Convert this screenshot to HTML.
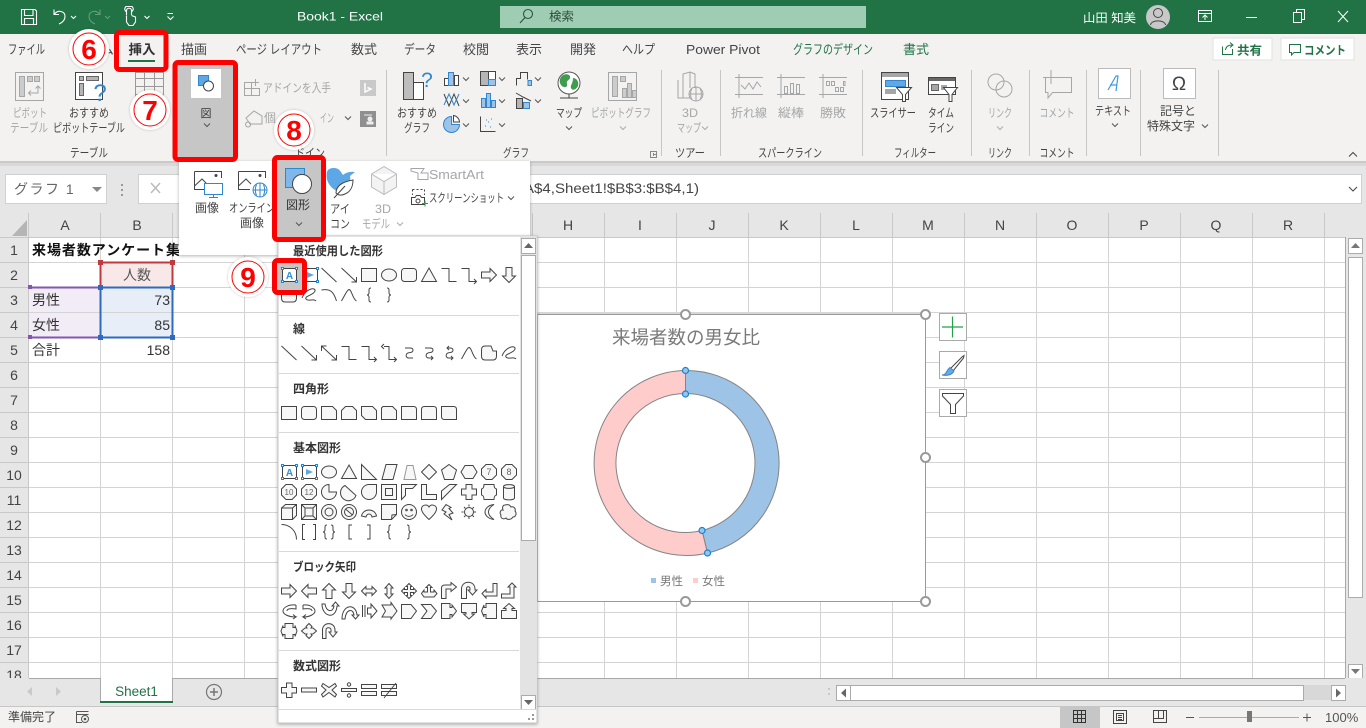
<!DOCTYPE html>
<html lang="ja"><head><meta charset="utf-8"><title>Book1 - Excel</title>
<style>
html,body{margin:0;padding:0;width:1366px;height:728px;overflow:hidden;background:#e6e6e6}
svg{display:block;position:absolute;left:0;top:0}
text{font-family:"Liberation Sans","Noto Sans CJK JP",sans-serif;font-size:12px;fill:#444;stroke:none}
.m{text-anchor:middle}.e{text-anchor:end}.g{fill:#a6a6a6}.w{fill:#fff}.gl{fill:#217346}
.tab text,.tab{font-size:13px}
.c{font-size:14px;fill:#333}.h{font-size:14px;fill:#444;text-anchor:middle}
.b{font-weight:bold;fill:#333}
.n{font-size:28px;font-weight:bold;fill:#f00;text-anchor:middle}
.s{fill:#f7f7f7;stroke:#444;stroke-width:1}
.s .f,.f{fill:none}
.ic{fill:none;stroke:#555;stroke-width:1}
.ig{fill:none;stroke:#a6a6a6;stroke-width:1}
.ch{fill:none;stroke:#555;stroke-width:1}
.chg{fill:none;stroke:#aaa;stroke-width:1}
.sm{font-size:9px;fill:#666;text-anchor:middle}
</style></head><body>
<svg width="1366" height="728" viewBox="0 0 1366 728" xmlns="http://www.w3.org/2000/svg">
<defs>
<filter id="ds" x="-5%" y="-5%" width="110%" height="110%"><feDropShadow dx="0" dy="1" stdDeviation="1.5" flood-color="#000" flood-opacity=".3"/></filter>
<filter id="gl" x="-20%" y="-20%" width="140%" height="140%"><feDropShadow dx="0" dy="0" stdDeviation="1.2" flood-color="#000" flood-opacity=".25"/></filter>
<path id="chev" d="M-3-1.5 0 1.5 3-1.5" fill="none"/>
<g id="tb"><rect x="-6.5" y="-6.5" width="14" height="13" fill="#fff" stroke="#444"/><text x="0.500" y="4" class="m" style="font-size:10px;font-weight:bold;fill:#2f8fd8">A</text><path d="M-7.500-7.500h2v2h-2zM6.500-7.500h2v2h-2zM-7.500 5.500h2v2h-2zM6.500 5.500h2v2h-2z" fill="#fff" stroke="#1e88d2"/></g>
<g id="vtb"><rect x="-6.500" y="-6.500" width="14" height="13" fill="#fff" stroke="#444"/><path d="M-3-3 4 0-3 3z" fill="#5aa8e0" stroke="none"/><path d="M-7.500-7.500h2v2h-2zM6.500-7.500h2v2h-2zM-7.500 5.500h2v2h-2zM6.500 5.500h2v2h-2z" fill="#fff" stroke="#1e88d2"/></g>
<path id="line" class="f" d="M-7.5-7 7.5 7"/>
<path id="arr" class="f" d="M-7.5-7 7.5 7M7.5 2V7H2.5"/>
<path id="dar" class="f" d="M-7.5-7 7.5 7M7.5 2V7H2.5M-7.5-2V-7H-2.5"/>
<rect id="rc" x="-7.5" y="-6.5" width="15" height="13"/>
<ellipse id="el" cx="0" cy="0" rx="7.5" ry="6"/>
<rect id="rr" x="-7.5" y="-6.5" width="15" height="13" rx="3"/>
<path id="tri" d="M0-7 7.5 6.5H-7.5z"/>
<path id="elb" class="f" d="M-7.5-6.5H0V6.5H7.5"/>
<path id="ela" class="f" d="M-7.5-6.5H0V6.5H7.5M5 4l2.5 2.5L5 9"/>
<path id="eld" class="f" d="M-5-6.5H0V6.5H7.5M5 4l2.5 2.5L5 9M-5-9l-2.5 2.5L-5-4"/>
<path id="ra" d="M-7.5-3H1V-6.5L7.5 0 1 6.5V3H-7.5z"/>
<path id="la" d="M7.5-3H-1V-6.5L-7.5 0-1 6.5V3H7.5z"/>
<path id="ua" d="M-3 7.5V-1H-6.5L0-7.5 6.5-1H3V7.5z"/>
<path id="da" d="M-3-7.5V1H-6.5L0 7.5 6.5 1H3V-7.5z"/>
<path id="ff" d="M-4-7H2L4-2H7.5V3Q7.5 7 4 7H-4Q-7.5 7-7.5 3V-3Q-7.5-7-4-7z"/>
<path id="scr" class="f" d="M-7 3C-3-7 7-8 6-4S-5 1-3 4 5 3 7 6"/>
<path id="cur" class="f" d="M-7.5-5C2-7 5-2 7.5 6"/>
<path id="wav" class="f" d="M-7.5 6C-3-2-1-7 1-5S4 4 7.5 6"/>
<path id="lb" class="f" d="M2-7C0-7 0-6 0-4V-2C0-1-1 0-2 0-1 0 0 1 0 2V4C0 6 0 7 2 7"/>
<path id="rb" class="f" d="M-2-7C0-7 0-6 0-4V-2C0-1 1 0 2 0 1 0 0 1 0 2V4C0 6 0 7-2 7"/>
<path id="sc" class="f" d="M-4-5H1C5-5 5-1 1-.5-4 0-4 5 0 5H4"/>
<path id="sna" class="f" d="M-4-5H1C5-5 5-1 1-.5-4 0-4 5 0 5H4M2 3l2 2-2 2"/>
<path id="snd" class="f" d="M-2-5H1C5-5 5-1 1-.5-4 0-4 5 0 5H4M2 3l2 2-2 2M0-7-2-5 0-3"/>
<path id="sn1" d="M-7.5-6.5H3.5L7.5-2.5V6.5H-7.5z"/>
<path id="sn2" d="M-3.5-6.5H3.5L7.5-2.5V6.5H-7.5V-2.5z"/>
<path id="snd2" d="M-7.5-6.5H3.5L7.5-2.5V6.5H-3.5L-7.5 2.5z"/>
<path id="sr" d="M-6-6.5H3.5L7.5-2.5V6.5H-7.5V-5z"/>
<path id="r1" d="M-7.5-6.5H4.5Q7.5-6.5 7.5-3.5V6.5H-7.5z"/>
<path id="r2" d="M-4.5-6.5H4.5Q7.5-6.5 7.5-3.5V6.5H-7.5V-3.5Q-7.5-6.5-4.5-6.5z"/>
<path id="r3" d="M-7.5-6.5H4.5Q7.5-6.5 7.5-3.5V6.5H-4.5Q-7.5 6.5-7.5 3.5z"/>
<path id="oc" d="M-3-7.5H3L7.5-3V3L3 7.5H-3L-7.5 3V-3z"/>
<path id="hex" d="M-4-6.5H4L8 0 4 6.5H-4L-8 0z"/>
</defs>

<!-- Title bar -->
<rect width="1366" height="34" fill="#217346"/>
<g fill="none" stroke="#fff" stroke-width="1.1">
<path d="M21.5 9.5H35L36.5 11V24.500H21.5zM24.500 9.500V15.500H33V9.500M24.500 24.500V18.500H33.500V24.500"/>
<path d="M54 9.500V14.500H59M54.500 14C58 9.500 65 11 65 16.500 65 20 62.500 22.500 59 24"/>
<path d="M71 16l2.500 2.500L76 16"/>
<path opacity=".3" d="M100 9.500V14.500H95M99.500 14C96 9.500 89 11 89 16.500 89 20 91.500 22.500 95 24M105 16l2.500 2.500L110 16"/>
<path d="M126.500 15V10.500C126.500 7.500 131.500 7.500 131.500 10.500V15M127 12C124.500 11 124 8 126 6.500H132C134 8 133.500 11 131 12M126.500 15.500V22L129 25.500H133L135.500 22V17L131.500 15.500"/>
<path d="M144.500 16l2.500 2.500L149.500 16M167.500 13.500H173M167.500 16.500l3 3 3-3"/>
</g>
<text x="297" y="20.500" class="w" textLength="86" lengthAdjust="spacingAndGlyphs">Book1  -  Excel</text>
<rect x="500" y="6" width="366" height="22" fill="#9fcdb3"/>
<circle cx="528" cy="14" r="4.500" fill="none" stroke="#2b5a41" stroke-width="1.100"/><path d="M525 17.500 520 23" stroke="#2b5a41" stroke-width="1.200"/>
<text x="549" y="20.500" style="fill:#2b4a3a" textLength="25" lengthAdjust="spacingAndGlyphs">検索</text>
<text x="1083" y="22" class="w" textLength="53" lengthAdjust="spacingAndGlyphs">山田 知美</text>
<circle cx="1158" cy="17" r="12" fill="#c8c8c8"/><circle cx="1158" cy="13" r="4.500" fill="none" stroke="#444"/><path d="M1150.500 25C1151 19.500 1165 19.500 1165.500 25" fill="none" stroke="#444"/>
<g fill="none" stroke="#fff"><path d="M1198.500 10.500H1211.500V21.500H1198.500zM1198.500 13.500H1211.500M1205 20V15.500M1202.500 17.500l2.500-2.500 2.500 2.500"/>
<path d="M1246 17.500H1257M1293.500 12.500H1301.500V22.500H1293.500zM1296.500 12.500V9.500H1304.500V19.500H1301.500M1338 11 1348 22M1348 11 1338 22"/></g>

<!-- Ribbon -->
<rect y="34" width="1366" height="127" fill="#f3f2f1"/>
<rect y="161" width="1366" height="5" fill="#d9d9d9"/><rect y="161" width="1366" height="2" fill="#c9c9c9"/>
<g>
<text x="8" y="54" style="font-size:13px" textLength="37" lengthAdjust="spacingAndGlyphs">ファイル</text>
<text x="181" y="54" style="font-size:13px" textLength="26" lengthAdjust="spacingAndGlyphs">描画</text>
<text x="236" y="54" style="font-size:13px" textLength="86" lengthAdjust="spacingAndGlyphs">ページ レイアウト</text>
<text x="351" y="54" style="font-size:13px" textLength="26" lengthAdjust="spacingAndGlyphs">数式</text>
<text x="404" y="54" style="font-size:13px" textLength="32" lengthAdjust="spacingAndGlyphs">データ</text>
<text x="463" y="54" style="font-size:13px" textLength="26" lengthAdjust="spacingAndGlyphs">校閲</text>
<text x="516" y="54" style="font-size:13px" textLength="26" lengthAdjust="spacingAndGlyphs">表示</text>
<text x="570" y="54" style="font-size:13px" textLength="26" lengthAdjust="spacingAndGlyphs">開発</text>
<text x="622" y="54" style="font-size:13px" textLength="33" lengthAdjust="spacingAndGlyphs">ヘルプ</text>
<text x="686" y="54" textLength="74" lengthAdjust="spacingAndGlyphs" style="font-size:13px">Power Pivot</text>
<text x="793" y="54" class="gl" style="font-size:13px" textLength="80" lengthAdjust="spacingAndGlyphs">グラフのデザイン</text>
<text x="903" y="54" class="gl" style="font-size:13px" textLength="26" lengthAdjust="spacingAndGlyphs">書式</text>
<text x="100" y="54" textLength="14" lengthAdjust="spacingAndGlyphs">ム</text>
</g>
<rect x="1213" y="38" width="59" height="22" fill="#fff" stroke="#e1e1e1"/>
<path d="M1222.500 46.500V54.500H1232.500V49M1225.500 50C1226 46 1229 45 1232 45M1230 42.500l3 2.500-3 2.500" fill="none" stroke="#217346"/>
<text x="1237" y="54.500" class="gl b" style="fill:#217346" textLength="25" lengthAdjust="spacingAndGlyphs">共有</text>
<rect x="1281" y="38" width="73" height="22" fill="#fff" stroke="#e1e1e1"/>
<path d="M1289.500 44.500H1300.500V52.500H1294L1291.500 55V52.500H1289.500z" fill="none" stroke="#217346"/>
<text x="1304" y="54.500" class="b" style="fill:#217346" textLength="42" lengthAdjust="spacingAndGlyphs">コメント</text>
<path d="M386.500 70V156M661.500 70V156M720.500 70V156M862.500 70V156M971.500 70V156M1029.500 70V156M1086.500 70V156M1140.500 70V156M1218.500 70V156" stroke="#c8c6c4"/>

<!-- tables group -->
<g class="ig"><rect x="15.500" y="72.500" width="28" height="28" fill="#f3f2f1"/><rect x="19.500" y="76.500" width="5" height="20" fill="#ccc"/><rect x="27.500" y="76.500" width="5" height="5" fill="#ccc"/><rect x="34.500" y="76.500" width="5" height="5" fill="#ccc"/><path d="M38 86V93H29M31 90.500l-2.500 2.500 2.500 2.500M35.500 88.500 38 86l2.500 2.500" /></g>
<text x="30" y="117" class="m g" textLength="34" lengthAdjust="spacingAndGlyphs">ピボット</text>
<text x="29" y="132" class="m g" textLength="38" lengthAdjust="spacingAndGlyphs">テーブル</text>
<g fill="none" stroke="#444"><rect x="75.500" y="72.500" width="27" height="27" fill="#fff"/><rect x="79.500" y="76.500" width="4" height="4" fill="#b5b5b5" stroke="#666"/><rect x="86.500" y="76.500" width="12" height="4" fill="#b5b5b5" stroke="#666"/><rect x="79.500" y="83.500" width="4" height="12" fill="#b5b5b5" stroke="#666"/></g>
<text x="100" y="101" class="m" style="font-size:24px;fill:#2f87d0">?</text>
<text x="89" y="117" class="m" textLength="40" lengthAdjust="spacingAndGlyphs">おすすめ</text>
<text x="89" y="132" class="m" textLength="72" lengthAdjust="spacingAndGlyphs">ピボットテーブル</text>
<path d="M135.500 72.500H163.500V96.500H135.500zM135.500 78.500H163.500M135.500 86.500H163.500M135.500 94.500H163.500M144.500 72.500V96.500M154.500 72.500V96.500" fill="none" stroke="#999"/>
<text x="89" y="157" class="m" textLength="38" lengthAdjust="spacingAndGlyphs">テーブル</text>

<!-- add-ins -->
<path d="M244.500 82.500H251.500V88.500H244.500zM244.500 88.500H251.500V95.500H244.500zM251.500 88.500H259.500V95.500H251.500zM255.500 79V86M252 82.500H259" fill="none" stroke="#a6a6a6"/>
<text x="263" y="92" class="g" textLength="68" lengthAdjust="spacingAndGlyphs">アドインを入手</text>
<rect x="360" y="80" width="16" height="16" fill="#c9c9c9"/><path d="M365 83V92L371 89 367.500 87.500" fill="none" stroke="#fff" stroke-width="1.500"/>
<path d="M246 118 254 111 262 116 262 124H250zM248 122a2.500 2.500 0 1 0 .1 0" fill="none" stroke="#a6a6a6"/>
<text x="264" y="122" class="g" textLength="12" lengthAdjust="spacingAndGlyphs">個</text>
<text x="320" y="122" class="g" textLength="14" lengthAdjust="spacingAndGlyphs">イン</text>
<use href="#chev" x="348" y="118" class="ch"/>
<rect x="360" y="111" width="16" height="16" fill="#8f8f8f"/><circle cx="370" cy="119" r="2.500" fill="#eee"/><path d="M364 115H372M367 124H373V122H367z" stroke="#eee" fill="#eee"/>
<text x="310" y="157" class="m" textLength="30" lengthAdjust="spacingAndGlyphs">ドイン</text>

<!-- charts -->
<rect x="403.500" y="72.500" width="10" height="27" fill="#bdbdbd" stroke="#444"/><rect x="413.500" y="82.500" width="10" height="17" fill="#fff" stroke="#444"/>
<text x="427" y="87" class="m" style="font-size:21px;fill:#2f87d0">?</text>
<text x="417" y="117" class="m" textLength="40" lengthAdjust="spacingAndGlyphs">おすすめ</text>
<text x="417" y="132" class="m" textLength="26" lengthAdjust="spacingAndGlyphs">グラフ</text>
<g stroke="#444">
<rect x="444.500" y="78.500" width="4" height="7" fill="#fff"/><rect x="448.500" y="72.500" width="5" height="13" fill="#9dc3e6" stroke="#2f87d0"/><rect x="454.500" y="75.500" width="4" height="10" fill="#fff"/>
<rect x="480.500" y="71.500" width="8" height="14" fill="#b5b5b5"/><rect x="488.500" y="71.500" width="7" height="8" fill="#fff"/><rect x="488.500" y="79.500" width="7" height="6" fill="#9dc3e6" stroke="#2f87d0"/>
<path d="M516.500 85.500V78.500H520.500V72.500H527.500V79.500M531.500 85.500V80.500H527.500" fill="none"/><path d="M528 80.500H531.500V85.500H528z" fill="#9dc3e6" stroke="#2f87d0"/>
<path d="M444 94 449 106 454 94 459 106" fill="none"/><path d="M444 105 449 94 454 105 459 94" fill="none" stroke="#2f87d0"/>
<rect x="481.500" y="98.500" width="4" height="9" fill="#9dc3e6" stroke="#2f87d0"/><rect x="486.500" y="93.500" width="4" height="14" fill="#9dc3e6" stroke="#2f87d0"/><rect x="491.500" y="100.500" width="4" height="7" fill="#9dc3e6" stroke="#2f87d0"/>
<rect x="516.500" y="98.500" width="6" height="10" fill="#b5b5b5"/><rect x="523.500" y="102.500" width="6" height="6" fill="#9dc3e6" stroke="#2f87d0"/><path d="M516 93 523 97 531 101" fill="none"/>
<path d="M451.500 116.500A8 8 0 1 0 459.500 124.500H451.500z" fill="#9dc3e6" stroke="#2f87d0"/><path d="M453.500 115.500A7 7 0 0 1 459.500 122H453.500z" fill="#fff"/>
<path d="M480.500 116.500V131.500H495.500" fill="none"/>
</g>
<path d="M485 126h1M488 122h1M491 119h1M490 127h1M486 120h1" stroke="#2f87d0"/>
<g class="ch"><use href="#chev" x="466" y="79"/><use href="#chev" x="502" y="79"/><use href="#chev" x="538" y="79"/><use href="#chev" x="466" y="101"/><use href="#chev" x="502" y="101"/><use href="#chev" x="538" y="101"/><use href="#chev" x="466" y="125"/><use href="#chev" x="502" y="125"/><use href="#chev" x="569" y="128"/></g>
<circle cx="569" cy="83" r="11" fill="#fff" stroke="#555"/>
<path d="M563 75C567 73 571 75 570 78S566 80 567 84 563 88 561 85 559 78 563 75zM573 78C577 78 579 82 578 86 576 90 572 91 571 88S573 84 573 78z" fill="#3f9e4d"/>
<path d="M560 98H578M569 94V98" stroke="#444"/>
<text x="569" y="117" class="m" textLength="26" lengthAdjust="spacingAndGlyphs">マップ</text>
<g class="ig"><rect x="608.500" y="72.500" width="28" height="28"/><rect x="612.500" y="76.500" width="5" height="20" fill="#ccc"/><rect x="620.500" y="76.500" width="5" height="5" fill="#ccc"/><rect x="622.500" y="88.500" width="4" height="9" fill="#ccc"/><rect x="627.500" y="83.500" width="4" height="14" fill="#ccc"/><rect x="632.500" y="90.500" width="4" height="7" fill="#ccc"/></g>
<text x="621" y="117" class="m g" textLength="60" lengthAdjust="spacingAndGlyphs">ピボットグラフ</text>
<use href="#chev" x="623" y="128" class="chg"/>
<text x="516" y="157" class="m" textLength="26" lengthAdjust="spacingAndGlyphs">グラフ</text>
<path d="M650.500 151.500H656.500V157.500H650.500zM653 154.500H656M653.500 153V156" fill="none" stroke="#888"/>

<!-- 3D map -->
<g class="ig"><path d="M678 80V98H690M683 98V74L690 72 695 74V88M690 72V88" /><circle cx="696" cy="94" r="7" /><path d="M689 94H703M696 87V101M692 88C690 92 690 96 692 100M700 88C702 92 702 96 700 100"/></g>
<text x="690" y="117" class="m g" textLength="16" lengthAdjust="spacingAndGlyphs">3D</text>
<text x="689" y="132" class="m g" textLength="24" lengthAdjust="spacingAndGlyphs">マップ</text><use href="#chev" x="705" y="128" class="chg"/>
<text x="690" y="157" class="m" textLength="30" lengthAdjust="spacingAndGlyphs">ツアー</text>

<!-- sparklines -->
<g class="ig"><path d="M735 77.500H763M735 94.500H763M739 74V98"/><path d="M741 85 745 89 749 83 753 89 757 82 761 87"/>
<path d="M777 77.500H805M777 94.500H805M781 74V98"/><path d="M784.500 86.500H787.500V93.500H784.500zM790.500 83.500H793.500V93.500H790.500zM796.500 84.500H799.500V93.500H796.500z"/>
<path d="M819 77.500H847M819 94.500H847M823 74V98"/><path d="M826.500 81.500H829.500V85.500H826.500zM831.500 81.500H834.500V85.500H831.500zM835.500 87.500H838.500V91.500H835.500zM840.500 87.500H843.500V91.500H840.500zM843.500 81.500H845V85.500H843.500z"/></g>
<text x="749" y="117" class="m g" textLength="36" lengthAdjust="spacingAndGlyphs">折れ線</text>
<text x="791" y="117" class="m g" textLength="26" lengthAdjust="spacingAndGlyphs">縦棒</text>
<text x="833" y="117" class="m g" textLength="26" lengthAdjust="spacingAndGlyphs">勝敗</text>
<text x="790" y="157" class="m" textLength="64" lengthAdjust="spacingAndGlyphs">スパークライン</text>

<!-- filters -->
<rect x="881.500" y="72.500" width="27" height="27" fill="#fff" stroke="#444"/><rect x="882" y="73" width="26" height="4" fill="#a6a6a6"/><rect x="885.500" y="80.500" width="20" height="6" fill="#63a8e4" stroke="#2f87d0"/><rect x="885" y="89" width="11" height="5" fill="#a6a6a6"/>
<path d="M896.500 87.500H911.500L905.500 94.500V101.500H902.500V94.500z" fill="#fff" stroke="#444"/>
<rect x="928.500" y="77.500" width="27" height="17" fill="#fff" stroke="#444"/><rect x="929" y="78" width="26" height="3" fill="#666"/><rect x="931.500" y="84.500" width="7" height="6" fill="#a6a6a6" stroke="#666"/><rect x="941" y="85" width="6" height="5" fill="#a6a6a6"/>
<path d="M943.500 87.500H957.500L952 94.500V101.500H949V94.500z" fill="#fff" stroke="#444"/>
<text x="893" y="117" class="m" textLength="46" lengthAdjust="spacingAndGlyphs">スライサー</text>
<text x="941" y="117" class="m" textLength="26" lengthAdjust="spacingAndGlyphs">タイム</text>
<text x="941" y="132" class="m" textLength="26" lengthAdjust="spacingAndGlyphs">ライン</text>
<text x="915" y="157" class="m" textLength="42" lengthAdjust="spacingAndGlyphs">フィルター</text>

<!-- links, comment -->
<g class="ig" stroke-width="1.200"><circle cx="996" cy="82" r="8"/><circle cx="1004" cy="89" r="8"/></g>
<text x="1000" y="117" class="m g" textLength="24" lengthAdjust="spacingAndGlyphs">リンク</text><use href="#chev" x="1000" y="128" class="chg"/>
<text x="1000" y="157" class="m" textLength="24" lengthAdjust="spacingAndGlyphs">リンク</text>
<path d="M1045.500 77.500H1071.500V92.500H1052.500L1048 98V92.500H1045.500zM1051 70V84M1043 77.500H1058" fill="none" stroke="#a6a6a6"/>
<text x="1057" y="117" class="m g" textLength="35" lengthAdjust="spacingAndGlyphs">コメント</text>
<text x="1057" y="157" class="m" textLength="35" lengthAdjust="spacingAndGlyphs">コメント</text>
<!-- text, symbols -->
<rect x="1098.500" y="68.500" width="32" height="30" fill="#fff" stroke="#bbb"/>
<path d="M1108 90 1116 76H1118L1116 91M1110 85H1117" fill="none" stroke="#3d9be0" stroke-width="1.200"/>
<text x="1113" y="115" class="m" textLength="36" lengthAdjust="spacingAndGlyphs">テキスト</text><use href="#chev" x="1115" y="125" class="ch"/>
<rect x="1163.500" y="68.500" width="32" height="30" fill="#fff" stroke="#bbb"/>
<text x="1179" y="90" class="m" style="font-size:19px;fill:#444">Ω</text>
<text x="1178" y="115" class="m" textLength="36" lengthAdjust="spacingAndGlyphs">記号と</text>
<text x="1171" y="130" class="m" textLength="48" lengthAdjust="spacingAndGlyphs">特殊文字</text><use href="#chev" x="1205" y="126" class="ch"/>
<path d="M1349 156.500l4-4 4 4" fill="none" stroke="#444"/>

<!-- Formula bar -->
<rect y="166" width="1366" height="47" fill="#e6e6e6"/>
<rect x="5.500" y="174.500" width="101" height="29" fill="#fff" stroke="#d0d0d0"/>
<text x="14" y="194" style="font-size:14px;fill:#666;letter-spacing:1.500px">グラフ 1</text>
<path d="M92 187H102L97 192z" fill="#888"/>
<path d="M122 184v2M122 189v2M122 194v2" stroke="#999" stroke-width="2"/>
<rect x="138.500" y="174.500" width="1223" height="29" fill="#fff" stroke="#d0d0d0"/>
<path d="M151 183l9 10M160 183l-9 10" stroke="#bbb" stroke-width="1.500"/>
<text x="524" y="193" style="font-size:14px;fill:#444" textLength="175" lengthAdjust="spacingAndGlyphs">A$4,Sheet1!$B$3:$B$4,1)</text>
<path d="M1349 187l4 4 4-4" fill="none" stroke="#444"/>

<!-- Sheet grid -->
<rect x="29" y="237" width="1316" height="441" fill="#fff"/>
<rect y="213" width="1345" height="24" fill="#e6e6e6"/>
<rect y="237" width="28" height="441" fill="#e6e6e6"/>
<path d="M27 236 27 220 12 236z" fill="#b5b5b5"/>
<g stroke="#d4d4d4">
<path d="M29 262.500H1345M29 287.500H1345M29 312.500H1345M29 337.500H1345M29 362.500H1345M29 387.500H1345M29 412.500H1345M29 437.500H1345M29 462.500H1345M29 487.500H1345M29 512.500H1345M29 537.500H1345M29 562.500H1345M29 587.500H1345M29 612.500H1345M29 637.500H1345M29 662.500H1345"/>
<path d="M100.500 237V678M172.500 237V678M244.500 237V678M316.500 237V678M388.500 237V678M460.500 237V678M532.500 237V678M604.500 237V678M676.500 237V678M748.500 237V678M820.500 237V678M892.500 237V678M964.500 237V678M1036.500 237V678M1108.500 237V678M1180.500 237V678M1252.500 237V678M1324.500 237V678"/>
</g>
<g stroke="#c8c8c8"><path d="M0 262.500H28M0 287.500H28M0 312.500H28M0 337.500H28M0 362.500H28M0 387.500H28M0 412.500H28M0 437.500H28M0 462.500H28M0 487.500H28M0 512.500H28M0 537.500H28M0 562.500H28M0 587.500H28M0 612.500H28M0 637.500H28M0 662.500H28M28.500 213V678M100.500 213V237M172.500 213V237M244.500 213V237M532.500 213V237M604.500 213V237M676.500 213V237M748.500 213V237M820.500 213V237M892.500 213V237M964.500 213V237M1036.500 213V237M1108.500 213V237M1180.500 213V237M1252.500 213V237M1324.500 213V237M0 237.500H1345"/></g>
<g>
<text class="h" x="65" y="230">A</text><text class="h" x="137" y="230">B</text><text class="h" x="568" y="230">H</text><text class="h" x="640" y="230">I</text><text class="h" x="712" y="230">J</text><text class="h" x="784" y="230">K</text><text class="h" x="856" y="230">L</text><text class="h" x="928" y="230">M</text><text class="h" x="1000" y="230">N</text><text class="h" x="1072" y="230">O</text><text class="h" x="1144" y="230">P</text><text class="h" x="1216" y="230">Q</text><text class="h" x="1288" y="230">R</text>
<text class="h" x="14" y="255">1</text><text class="h" x="14" y="280">2</text><text class="h" x="14" y="305">3</text><text class="h" x="14" y="330">4</text><text class="h" x="14" y="355">5</text><text class="h" x="14" y="380">6</text><text class="h" x="14" y="405">7</text><text class="h" x="14" y="430">8</text><text class="h" x="14" y="455">9</text><text class="h" x="14" y="480">10</text><text class="h" x="14" y="505">11</text><text class="h" x="14" y="530">12</text><text class="h" x="14" y="555">13</text><text class="h" x="14" y="580">14</text><text class="h" x="14" y="605">15</text><text class="h" x="14" y="630">16</text><text class="h" x="14" y="655">17</text><text class="h" x="14" y="680">18</text>
</g>
<!-- cell highlights -->
<rect x="101" y="263" width="71" height="24" fill="#f8e9e8"/>
<rect x="29" y="288" width="71" height="49" fill="#f1ecf6"/>
<rect x="101" y="288" width="71" height="49" fill="#e7eef8"/>
<path d="M29 312.500H172" stroke="#d4d4d4"/>
<text x="32" y="255" class="c" style="font-weight:bold;fill:#111" textLength="148">来場者数アンケート集</text>
<text x="137" y="280" class="c m" style="fill:#555">人数</text>
<text x="32" y="305" class="c">男性</text><text x="32" y="330" class="c">女性</text><text x="32" y="355" class="c">合計</text>
<text x="170" y="305" class="c e">73</text><text x="170" y="330" class="c e">85</text><text x="170" y="355" class="c e">158</text>
<path d="M30 287.500H100M30 337.500H100" stroke="#8456b3" stroke-width="2"/>
<rect x="28" y="285" width="4" height="4" fill="#8456b3"/><rect x="28" y="335" width="4" height="4" fill="#8456b3"/>
<rect x="100.500" y="262.500" width="72" height="25" fill="none" stroke="#c0393c" stroke-width="2"/>
<g fill="#c0393c"><rect x="98" y="260" width="5" height="5"/><rect x="170" y="260" width="5" height="5"/></g>
<rect x="100.500" y="287.500" width="72" height="50" fill="none" stroke="#2e6bc0" stroke-width="2"/>
<g fill="#2e6bc0"><rect x="98" y="285" width="5" height="5"/><rect x="170" y="285" width="5" height="5"/><rect x="98" y="335" width="5" height="5"/><rect x="170" y="335" width="5" height="5"/></g>

<!-- Chart -->
<rect x="536" y="312.500" width="390" height="2" fill="#d8d8d8"/>
<rect x="537.500" y="314.500" width="388" height="287" fill="#fff" stroke="#999"/>
<text x="686" y="344" class="m" style="font-size:18.500px;fill:#7a7a7a" textLength="148">来場者数の男女比</text>
<path d="M685.500 370.500A92.500 92.500 0 0 1 707.500 553.100L702 530.500A69.500 69.500 0 0 0 685.500 393.500z" fill="#9dc3e6" stroke="#848484"/>
<path d="M707.500 553.100A92.500 92.500 0 1 1 685.500 370.500V393.500A69.500 69.500 0 1 0 702 530.500z" fill="#ffcccc" stroke="#848484"/>
<g fill="#9dc3e6" stroke="#0f85d8" stroke-width="1.200"><circle cx="685.500" cy="370.500" r="3"/><circle cx="685.500" cy="394" r="3"/><circle cx="702" cy="530.500" r="3"/><circle cx="707.500" cy="553" r="3"/></g>
<rect x="651" y="578" width="5" height="5" fill="#9dc3e6"/><rect x="693" y="578" width="5" height="5" fill="#ffcccc"/>
<text x="660" y="585" style="font-size:11.500px;fill:#777">男性</text><text x="702" y="585" style="font-size:11.500px;fill:#777">女性</text>
<g fill="#fff" stroke="#999" stroke-width="2"><circle cx="685.500" cy="314.500" r="4.500"/><circle cx="925.500" cy="314.500" r="4.500"/><circle cx="925.500" cy="457.500" r="4.500"/><circle cx="685.500" cy="601.500" r="4.500"/><circle cx="925.500" cy="601.500" r="4.500"/></g>
<g fill="#fff" stroke="#aaa"><rect x="939.500" y="313.500" width="27" height="27"/><rect x="939.500" y="351.500" width="27" height="27"/><rect x="939.500" y="389.500" width="27" height="27"/></g>
<path d="M942 327H963M952.500 316.500V337.500" stroke="#22a146" stroke-width="1.200"/>
<path d="M950 369 962 357 964 355.500 963.500 358 953 371z" fill="#fff" stroke="#444"/>
<path d="M942 375C947 375 946 370 950 367.500L954 371C952 375 947 376 942 375z" fill="#6aa8e0" stroke="#3b86c9"/>
<path d="M942.500 393.500H963.500V396L955.500 404.500V413.500H950.500V404.500L942.500 396z" fill="#fff" stroke="#444"/>

<!-- V scrollbar -->
<rect x="1345" y="237" width="21" height="441" fill="#e6e6e6"/>
<path d="M1345.500 237V678" stroke="#a8a8a8"/>
<rect x="1348.500" y="238.500" width="14" height="15" fill="#fff" stroke="#ababab"/><path d="M1351 248H1360L1355.500 243z" fill="#777"/>
<rect x="1348.500" y="257.500" width="14" height="340" fill="#fff" stroke="#ababab"/>
<rect x="1348.500" y="664.500" width="14" height="14" fill="#fff" stroke="#ababab"/><path d="M1351 669H1360L1355.500 674z" fill="#777"/>

<!-- Tabs, hscroll -->
<rect y="678" width="1366" height="28" fill="#e6e6e6"/>
<path d="M29 678.500H1345" stroke="#a8a8a8"/>
<path d="M32 687V696L27 691.500zM56 687V696L61 691.500z" fill="#c9c9c9"/>
<rect x="100" y="678" width="73" height="25" fill="#fff"/>
<path d="M100.500 678V702M172.500 678V702" stroke="#aaa"/>
<rect x="100" y="701" width="73" height="2" fill="#217346"/>
<text x="136.500" y="696" class="m" style="font-size:13.500px;fill:#217346">Sheet1</text>
<circle cx="214" cy="692" r="7.500" fill="none" stroke="#777" stroke-width="1.200"/><path d="M210 692H218M214 688V696" stroke="#777" stroke-width="1.500"/>
<path d="M829 688v2M829 693v2" stroke="#aaa"/>
<rect x="836.500" y="685.500" width="14" height="15" fill="#fff" stroke="#ababab"/><path d="M846 688.500V697.500L841 693z" fill="#666"/>
<rect x="850.500" y="685.500" width="453" height="15" fill="#fff" stroke="#ababab"/>
<rect x="1304" y="685" width="27" height="15" fill="#d8d8d8"/>
<rect x="1331.500" y="685.500" width="14" height="15" fill="#fff" stroke="#ababab"/><path d="M1336 688.500V697.500L1341 693z" fill="#666"/>

<!-- Status bar -->
<rect y="706" width="1366" height="22" fill="#f3f2f1"/><path d="M0 706.500H1366" stroke="#c6c6c6"/>
<text x="8" y="721" textLength="48" lengthAdjust="spacingAndGlyphs">準備完了</text>
<path d="M76.500 711.500H88.500M76.500 714.500H88.500M76.500 711.500V722.500H82" fill="none" stroke="#555"/><circle cx="85" cy="719" r="3.500" fill="none" stroke="#555"/><circle cx="85" cy="719" r="1.300" fill="#555"/>
<rect x="1060" y="707" width="40" height="21" fill="#c6c6c6"/>
<path d="M1073.500 710.500H1085.500V722.500H1073.500zM1073.500 714.500H1085.500M1073.500 718.500H1085.500M1077.500 710.500V722.500M1081.500 710.500V722.500" fill="none" stroke="#333"/>
<path d="M1113.500 710.500H1126.500V723.500H1113.500zM1116.500 713.500H1123.500V720.500H1116.500zM1118 715.500H1122M1118 717.500H1122M1118 719.500H1122" fill="none" stroke="#444"/>
<path d="M1153.500 710.500H1166.500V722.500H1153.500zM1153.500 718.500H1163.500V710.500M1158.500 710.500V718.500" fill="none" stroke="#444"/>
<path d="M1186 717.500H1194M1303 717.500H1311M1307 713.500V721.500" stroke="#555"/>
<path d="M1199 717.500H1299" stroke="#aaa"/>
<rect x="1247" y="711" width="5" height="11" fill="#777"/>
<text x="1325" y="722" style="font-size:13px;fill:#555">100%</text>

<!-- Picture dropdown panel -->
<rect x="179" y="161" width="351" height="94" fill="#fff" filter="url(#ds)"/>
<g fill="none" stroke="#444"><path d="M194.500 171.500H221.500V178M194.500 171.500V189.500H204M194.500 186 202 179 207 184"/><circle cx="216" cy="175.500" r="1" fill="#444"/>
<rect x="204.500" y="183.500" width="18" height="11" stroke="#2f87d0" fill="#fff"/><path d="M213.500 194.500V197M209 197.500H218" stroke="#2f87d0"/>
<path d="M238.500 171.500H265.500V178M238.500 171.500V189.500H250M238.500 186 246 179 251 184"/><circle cx="260" cy="175.500" r="1" fill="#444"/></g>
<circle cx="260" cy="190" r="7" fill="#fff" stroke="#2f87d0"/><path d="M253 190H267M260 183V197M256.500 184.500C255 188 255 192 256.500 195.500M263.500 184.500C265 188 265 192 263.500 195.500" fill="none" stroke="#2f87d0"/>
<text x="207" y="212" class="m" textLength="24" lengthAdjust="spacingAndGlyphs">画像</text>
<text x="252" y="212" class="m" textLength="46" lengthAdjust="spacingAndGlyphs">オンライン</text>
<text x="252" y="227" class="m" textLength="24" lengthAdjust="spacingAndGlyphs">画像</text>
<path d="M327 172C328 168 334 167 338 169 341 171 342 174 343 175 345 173 350 171 355 172L350 176C351 181 350 187 345 191H337C330 188 325 180 327 172z" fill="#5da7e6"/>
<path d="M353 180C353 187 350 192 345 194 341 196 338 195 336 193 336 187 341 182 353 180zM334 198 345 186" fill="#fff" stroke="#444"/>
<text x="340" y="213" class="m" textLength="20" lengthAdjust="spacingAndGlyphs">アイ</text>
<text x="340" y="228" class="m" textLength="20" lengthAdjust="spacingAndGlyphs">コン</text>
<path d="M371.500 174 384 166.500 396.500 174V187L384 194.500 371.500 187zM371.500 174 384 181.500 396.500 174M384 181.500V194.500" fill="#f3f3f3" stroke="#bbb"/>
<text x="383" y="213" class="m g" textLength="16" lengthAdjust="spacingAndGlyphs">3D</text>
<text x="376" y="228" class="m g" textLength="28" lengthAdjust="spacingAndGlyphs">モデル</text><use href="#chev" x="400" y="224" class="chg"/>
<path d="M411 168.500H424L421 173H428V179.500H418V173L411 171z" fill="none" stroke="#a6a6a6"/>
<text x="429" y="179" class="g" style="font-size:12.500px" textLength="55" lengthAdjust="spacingAndGlyphs">SmartArt</text>
<path d="M412.500 189.500H424.500" stroke="#444" stroke-dasharray="2 2" fill="none"/><path d="M412.500 189.500V195M424.500 189.500V195" stroke="#444" stroke-dasharray="2 2"/>
<path d="M411.500 197.500H415L416.500 195.500H420L421.500 197.500H424.500V204.500H411.500z" fill="#fff" stroke="#444"/><circle cx="418" cy="201" r="2" fill="none" stroke="#444"/>
<path d="M422 203.500H428M425 200.500V206.500" stroke="#22a146"/>
<text x="429" y="202" textLength="75" lengthAdjust="spacingAndGlyphs">スクリーンショット</text><use href="#chev" x="511" y="198" class="ch"/>

<!-- Shapes menu -->
<rect x="278" y="236" width="259" height="487" fill="#fff" stroke="#c6c6c6" filter="url(#ds)"/>
<rect x="520" y="237" width="16" height="472" fill="#e3e3e3"/>
<rect x="521.500" y="238.500" width="14" height="15" fill="#fff" stroke="#ababab"/><path d="M524 248H533L528.500 243z" fill="#666"/>
<rect x="521.500" y="255.500" width="14" height="285" fill="#fff" stroke="#ababab"/>
<rect x="521.500" y="695.500" width="14" height="14" fill="#fff" stroke="#ababab"/><path d="M524 700H533L528.500 705z" fill="#666"/>
<path d="M279 315.500H519M279 373.500H519M279 432.500H519M279 551.500H519M279 650.500H519M279 709.500H536" stroke="#d9d9d9"/>
<path d="M532 714h2v2h-2zM532 718h2v2h-2zM528 718h2v2h-2z" fill="#999"/>
<text x="293" y="255" class="b" textLength="90" lengthAdjust="spacingAndGlyphs">最近使用した図形</text>
<text x="293" y="333" class="b">線</text>
<text x="293" y="393" class="b" textLength="36" lengthAdjust="spacingAndGlyphs">四角形</text>
<text x="293" y="452" class="b" textLength="48" lengthAdjust="spacingAndGlyphs">基本図形</text>
<text x="293" y="571" class="b" textLength="63" lengthAdjust="spacingAndGlyphs">ブロック矢印</text>
<text x="293" y="670" class="b" textLength="48" lengthAdjust="spacingAndGlyphs">数式図形</text>

<g class="s">
<!-- recent -->
<use href="#vtb" x="310" y="275"/><use href="#line" x="329" y="275"/><use href="#arr" x="349" y="275"/><use href="#rc" x="369" y="275"/><use href="#el" x="389" y="275"/><use href="#rr" x="409" y="275"/><use href="#tri" x="429" y="275"/><use href="#elb" x="449" y="275"/><use href="#ela" x="469" y="275"/><use href="#ra" x="489" y="275"/><use href="#da" x="509" y="275"/>
<use href="#ff" x="289" y="295"/><use href="#scr" x="309" y="295"/><use href="#cur" x="329" y="295"/><use href="#wav" x="349" y="295"/><use href="#lb" x="369" y="295"/><use href="#rb" x="389" y="295"/>
<!-- lines -->
<use href="#line" x="289" y="353"/><use href="#arr" x="309" y="353"/><use href="#dar" x="329" y="353"/><use href="#elb" x="349" y="353"/><use href="#ela" x="369" y="353"/><use href="#eld" x="389" y="353"/><use href="#sc" x="409" y="353"/><use href="#sna" x="429" y="353"/><use href="#snd" x="449" y="353"/><use href="#wav" x="469" y="353"/><use href="#ff" x="489" y="353"/><use href="#scr" x="509" y="353"/>
<!-- rects -->
<use href="#rc" x="289" y="413"/><use href="#rr" x="309" y="413"/><use href="#sn1" x="329" y="413"/><use href="#sn2" x="349" y="413"/><use href="#snd2" x="369" y="413"/><use href="#sr" x="389" y="413"/><use href="#r1" x="409" y="413"/><use href="#r2" x="429" y="413"/><use href="#r3" x="449" y="413"/>
<!-- basic -->
<use href="#tb" x="289" y="472"/><use href="#vtb" x="309" y="472"/><use href="#el" x="329" y="472"/><use href="#tri" x="349" y="472"/>
<path d="M361.500 464.500V479.500H376.500z"/>
<path d="M382 479.500 386 464.500H397L393 479.500z"/>
<path d="M404 479.500 407 465.500H413L416 479.500z" stroke="#999"/>
<path d="M429 464.500 436.500 472 429 479.500 421.500 472z"/>
<path d="M449 464.500 456.500 470 453.500 479.500H444.500L441.500 470z"/>
<use href="#hex" x="469" y="472"/><use href="#oc" x="489" y="472"/><use href="#oc" x="509" y="472"/>
<use href="#oc" x="289" y="492"/><use href="#oc" x="309" y="492"/>
<path d="M329 484.500A7.500 7.500 0 1 0 336.500 492H329z"/>
<path d="M345 485.500 356 495.500A8 8 0 1 1 345 485.500z"/>
<path d="M376.500 484.500V492A7.500 7.500 0 1 1 369 484.500z"/>
<path d="M381.500 484.500H396.500V499.500H381.500zM385.500 488.500H392.500V495.500H385.500z"/>
<path d="M401.500 484.500H416.500L412.500 488.500H405.500V495.500L401.500 499.500z"/>
<path d="M421.500 484.500H426.500V494.500H436.500V499.500H421.500z"/>
<path d="M441.500 499.500V491L449.500 484.500H456.500z"/>
<path d="M466 484.500H472V489H476.500V495H472V499.500H466V495H461.500V489H466z"/>
<path d="M484 484.500H494C494 487 495 489 496.500 489V495C495 495 494 497 494 499.500H484C484 497 483 495 481.500 495V489C483 489 484 487 484 484.500z"/>
<path d="M503.500 486.500V498C503.500 500.500 514.500 500.500 514.500 498V486.500C514.500 484 503.500 484 503.500 486.500zM503.500 486.500C503.500 489 514.500 489 514.500 486.500"/>
<path d="M281.500 508 285.500 504.500H296.500V515.500L292.500 519.500H281.500zM281.500 508H292.500V519.500M292.500 508 296.500 504.500"/>
<path d="M301.500 504.500H316.500V519.500H301.500zM305 508H313V516H305zM301.500 504.500 305 508M316.500 504.500 313 508M301.500 519.500 305 516M316.500 519.500 313 516"/>
<circle cx="329" cy="512" r="7.500"/><circle cx="329" cy="512" r="4"/>
<circle cx="349" cy="512" r="7.500"/><circle cx="349" cy="512" r="4.500"/><path d="M345.500 509 352.500 515"/>
<path d="M361.500 516C363 508 375 508 376.500 516L372 517C371 513 367 513 366 517z"/>
<path d="M381.500 504.500H396.500V514.500L391.500 519.500H381.500zM396.500 514.500 392 515 391.500 519.500"/>
<circle cx="409" cy="512" r="7.500"/><circle cx="406.500" cy="510" r=".8"/><circle cx="411.500" cy="510" r=".8"/><path class="f" d="M405 514.500C407 517 411 517 413 514.500"/>
<path d="M429 519.500C424 515 421.500 512 421.500 509 421.500 505 427 503.500 429 507 431 503.500 436.500 505 436.500 509 436.500 512 434 515 429 519.500z"/>
<path d="M446 504.500 442 510 446 512 444 514 452 520 449 514.500 453 513 449 508.500 451 507.500z"/>
<circle cx="469" cy="512" r="4.500"/><path class="f" stroke-dasharray="2 2" d="M469 504.500V507M469 517V519.500M461.500 512H464M474 512H476.500M464 507 465.500 508.500M472.500 515.500 474 517M464 517 465.500 515.500M472.500 508.500 474 507"/>
<path d="M494 504.500C488 505 485 509 485 512S488 519 494 519.500C490 517 488.500 515 488.500 512S490 507 494 504.500z"/>
<path d="M505 505C508 504 510 505 511 507 514 506 516 509 515 511 517 513 516 517 513 517 511 520 507 520 506 518 503 520 500 518 501 515 499 513 501 509 503 510 502 507 503 505 505 505z"/>
<path class="f" d="M281.500 524.500C290 524.500 296.500 531 296.500 539.500"/>
<path class="f" d="M305 524.500H302.500V539.500H305M313 524.500H315.500V539.500H313"/>
<use href="#lb" x="325" y="532"/><use href="#rb" x="333" y="532"/>
<path class="f" d="M352 525H349V539H352M367 525H370V539H367"/>
<use href="#lb" x="389" y="532"/><use href="#rb" x="409" y="532"/>
<!-- block arrows -->
<use href="#ra" x="289" y="591"/><use href="#la" x="309" y="591"/><use href="#ua" x="329" y="591"/><use href="#da" x="349" y="591"/>
<path d="M361.500 591 366 586.500V589H372V586.500L376.500 591 372 595.500V593H366V595.500z"/>
<path d="M389 583.500 393 588H391V594H393L389 598.500 385 594H387V588H385z"/>
<path d="M409 583.500 412 586.500H410.500V589.500H413.500V588L416.500 591 413.500 594V592.500H410.500V595.500H412L409 598.500 406 595.500H407.500V592.500H404.500V594L401.500 591 404.500 588V589.500H407.500V586.500H406z"/>
<path d="M429 584.500 432 587.500H430.500V592H434V590L437 593.500 434 597H424L421.500 593.500 424 590V592H427.500V587.500H426z"/>
<path d="M441.500 598.500V588C441.500 586 443 585 445 585H451V582.500L456.500 587 451 591.500V589H446V598.500z"/>
<path d="M461.500 598.500V589C461.500 580 475 580 475 589V590H477L472.500 595 468 590H470V589C470 586 466.500 586 466.500 589V598.500z"/>
<path d="M482 593.500 486 589.500V592H493V583.500H497V596H486V598z"/>
<path d="M501.500 594H510V587H508L512 583 516 587H514V598H501.500z"/>
<path class="f" d="M296 605C288 604 283 608 283 611S288 617 296 617L293 619M296 617 293 614.500M296 605V609C290 608 287 609 287 611"/>
<path class="f" d="M303 605C310 604 315 608 315 611S310 617 303 617L306 619M303 617 306 614.500M303 605V609C309 608 312 609 312 611"/>
<path class="f" d="M322 604C322 617 336 620 337 606H339L335.500 602 332 606H334C333 613 326 612 325 604z"/>
<path class="f" d="M342 619C342 604 356 603 357 615H359L355.500 619 352 615H354C353 608 346 609 345 619z"/>
<path d="M362.500 605V617M365 605V617M367.500 608H371V604L377 611 371 618V614H367.500z" fill="#fff"/>
<path d="M382 605H391V602.500L397 611 391 619V617H382L385.500 611z"/>
<path d="M401.500 604.500H411L416.500 611 411 618.500H401.500z"/>
<path d="M421.500 604.500H431L436.500 611 431 618.500H421.500L427 611z"/>
<path d="M441.500 603.500H450V607.500H452V605L456.500 611 452 617V614.500H450V618.500H441.500z"/>
<path d="M461.500 603.500H476.500V612.500H472V614H474.500L469 619 463.500 614H466V612.500H461.500z"/>
<path d="M486 603.500H496.500V618.500H486V614.500H484V617L481.500 611 484 605V607.500H486z"/>
<path d="M501.500 618.500V610.500H506V608.500H503.500L509 603.500 514.500 608.500H512V610.500H516.500V618.500z"/>
<path d="M285 623.500H293V627.500H295V625.500L297 631 295 636.500V634.500H293V638.500H285V634.500H283V636.500L281 631 283 625.500V627.500H285z"/>
<path d="M309 623.500 312 626.500 311 628H313L316.500 631 313 634H311L312 635.500 309 638.500 306 635.500 307 634H305L301.500 631 305 628H307L306 626.500z"/>
<path d="M322.500 638.500V630C322.500 621.500 335 621.500 335 630V632H337L333 637 329 632H331V630C331 627 326 627 326 630V638.500z"/>
<!-- equation -->
<path d="M286.500 683H292V687.500H296.500V693H292V697.500H286.500V693H281.500V687.500H286.500z"/>
<rect x="301.500" y="688" width="15" height="4"/>
<path d="M323 683.500 329 687.500 335 683.500 336.500 686 332 690 336.500 694.500 335 697 329 692.500 323 697 321.500 694.500 326 690 321.500 686z"/>
<rect x="341.500" y="688.500" width="15" height="3"/><circle cx="349" cy="684.500" r="1.700"/><circle cx="349" cy="695.500" r="1.700"/>
<path d="M361.500 684.500H376.500V688.500H361.500zM361.500 691.500H376.500V695.500H361.500z"/>
<path d="M381.500 684.500H396.500V688.500H381.500zM381.500 691.500H396.500V695.500H381.500zM384 698 396 683"/>
</g>
<!-- labels inside octagon shapes -->
<text x="489" y="475" class="sm">7</text><text x="509" y="475" class="sm">8</text><text x="289" y="495" class="sm" style="font-size:8px">10</text><text x="309" y="495" class="sm" style="font-size:8px">12</text>

<!-- Red highlights -->
<rect x="116.500" y="32.500" width="49.500" height="37" rx="3" fill="#f3f2f1" stroke="#f00" stroke-width="5"/>
<text x="142" y="54" class="m b" style="fill:#333;font-size:13px" textLength="27" lengthAdjust="spacingAndGlyphs">挿入</text>
<rect x="128" y="60" width="27" height="2" fill="#217346"/>

<rect x="175" y="62.500" width="60.500" height="97" rx="3" fill="#c6c6c6" stroke="#f00" stroke-width="5"/>
<rect x="191" y="69" width="30" height="29" fill="#fff"/>
<rect x="198.500" y="75.500" width="10" height="10" fill="#5da7e6" stroke="#2f87d0"/><circle cx="208.500" cy="86" r="5" fill="#fff" stroke="#444"/>
<text x="206" y="117" class="m" style="font-size:11px;fill:#333">図</text>
<use href="#chev" x="207" y="125" class="ch"/>

<rect x="274.500" y="157.500" width="49" height="82" rx="3" fill="#c6c6c6" stroke="#f00" stroke-width="5"/>
<rect x="285.500" y="168.500" width="19" height="19" fill="#7fb7ea" stroke="#2f87d0"/><circle cx="302" cy="184" r="9.500" fill="#fff" stroke="#444"/>
<text x="298" y="209" class="m" style="fill:#333" textLength="24" lengthAdjust="spacingAndGlyphs">図形</text>
<use href="#chev" x="299" y="224" class="ch"/>

<rect x="274.500" y="260.500" width="30" height="32" rx="3" fill="#c6c6c6" stroke="#f00" stroke-width="5"/>
<use href="#tb" x="289" y="275"/>

<!-- Number badges -->
<g filter="url(#gl)"><circle cx="89" cy="49" r="20" fill="#fff"/><circle cx="150" cy="110" r="20" fill="#fff"/><circle cx="294" cy="130" r="20" fill="#fff"/><circle cx="248" cy="277" r="20" fill="#fff"/></g>
<g fill="none" stroke="#f00"><circle cx="89" cy="49" r="16"/><circle cx="150" cy="110" r="16"/><circle cx="294" cy="130" r="16"/><circle cx="248" cy="277" r="16"/></g>
<text x="89" y="59" class="n">6</text><text x="150" y="120" class="n">7</text><text x="294" y="140" class="n">8</text><text x="248" y="287" class="n">9</text>
</svg>
</body></html>
